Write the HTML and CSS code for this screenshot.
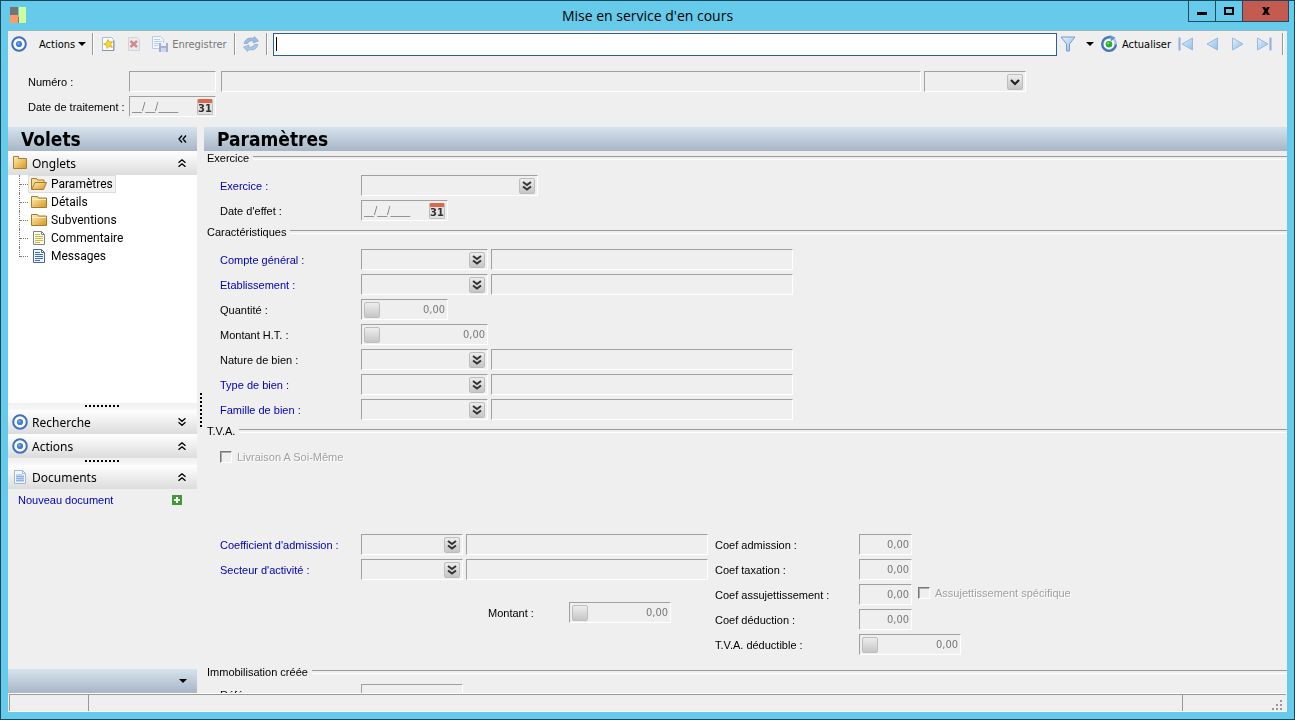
FILE: index.html
```html
<!DOCTYPE html>
<html lang="fr">
<head>
  <meta charset="UTF-8" />
  <title>Mise en service d'en cours</title>
  <link rel="stylesheet" href="styles.css">
</head>
<body>
  <svg class="sprites" aria-hidden="true">
    <defs>
      <linearGradient id="or" x1="0" y1="0" x2="1" y2="1">
        <stop offset="0" stop-color="#fff0b8"/><stop offset="1" stop-color="#d8951c"/>
      </linearGradient>
      <linearGradient id="bleu" x1="0" y1="0" x2="1" y2="1">
        <stop offset="0" stop-color="#e4f0fc"/><stop offset="1" stop-color="#8dbdec"/>
      </linearGradient>
    </defs>
    <symbol id="cible" viewBox="0 0 16 16">
      <circle cx="8" cy="8" r="6.8" fill="#fff" stroke="#3f6fc0" stroke-width="2"/>
      <circle cx="8" cy="8" r="3.1" fill="#3d7fd0"/>
      <circle cx="7.4" cy="7.4" r="1.2" fill="#7db4ee"/>
    </symbol>
    <symbol id="bas" viewBox="0 0 8 4"><path d="M0 0h8L4 4z" fill="#000"/></symbol>
    <symbol id="double-bas" viewBox="0 0 12 12">
      <path d="M2 2l4 3 4-3M2 6.500l4 3 4-3" fill="none" stroke="#333" stroke-width="2"/>
    </symbol>
    <symbol id="plier" viewBox="0 0 8 8">
      <path d="M.5 3.800L4 .8l3.500 3M.5 7.800L4 4.800l3.500 3" fill="none" stroke="#000" stroke-width="1.300"/>
    </symbol>
    <symbol id="deplier" viewBox="0 0 8 8">
      <path d="M.5.3L4 3.300 7.500.3M.5 4.300L4 7.300l3.500-3" fill="none" stroke="#000" stroke-width="1.300"/>
    </symbol>
    <symbol id="classeur" viewBox="0 0 16 16">
      <path d="M1.500 13.500v-12h5v2h8v10z" fill="url(#or)" stroke="#a5802f"/>
    </symbol>
    <symbol id="dossier" viewBox="0 0 16 16">
      <path d="M.5 13.500v-11h6l1 1.500h8v9.500z" fill="url(#or)" stroke="#a87c26"/>
      <path d="M1 5.500h14" stroke="#fff3c4"/>
    </symbol>
    <symbol id="dossier-ouvert" viewBox="0 0 16 16">
      <path d="M.5 13.500v-11h5l1 1.500h6.500v3" fill="#f7dc8c" stroke="#a87c26"/>
      <path d="M.7 13.500L4 6.500h11.500l-3 7z" fill="url(#or)" stroke="#a87c26"/>
    </symbol>
    <symbol id="page-jaune" viewBox="0 0 16 16">
      <path d="M2.500 1.500h8l3 3v10h-11z" fill="#fffde0" stroke="#7b8798"/>
      <path d="M10.500 1.500v3h3" fill="none" stroke="#7b8798"/>
      <path d="M4 4.500h5M4 6.500h8M4 8.500h8M4 10.500h8M4 12.500h5" stroke="#c9b551"/>
    </symbol>
    <symbol id="page-bleue" viewBox="0 0 16 16">
      <path d="M2.500 1.500h8l3 3v10h-11z" fill="#f2f7ff" stroke="#4d6795"/>
      <path d="M10.500 1.500v3h3" fill="none" stroke="#4d6795"/>
      <path d="M4 4.500h5M4 6.500h8M4 8.500h8M4 10.500h8M4 12.500h5" stroke="#3c6cd6"/>
    </symbol>
    <symbol id="document" viewBox="0 0 16 16">
      <path d="M2.500 1.500h8l3 3v10h-11z" fill="#f4f8ff" stroke="#a3b6d4"/>
      <path d="M10.500 1.500v3h3" fill="none" stroke="#a3b6d4"/>
      <path d="M4 5h6v1h2v7H4z" fill="#bcd3f3"/>
      <path d="M4 7.500h8M4 9.500h8M4 11.500h8" stroke="#8fb2e6"/>
    </symbol>
    <symbol id="nouveau" viewBox="0 0 16 16">
      <path d="M2.500 1.500h9l2 2v11h-11z" fill="#fbfcff" stroke="#a9bbd2"/>
      <path d="M2 14.500h12v-10" fill="none" stroke="#7d93b0"/>
      <path d="M8 3.500l1.400 2.500 3.300-.4-2 2.600 1.600 3.300-3.300-1L7 12.500l-.4-3L3.500 8.200l2.900-1.300z" fill="#f6da2c" stroke="#c9a51d" stroke-width=".7"/>
    </symbol>
    <symbol id="supprimer" viewBox="0 0 16 16">
      <path d="M2.500 1.500h9l2 2v11h-11z" fill="#e9e9ee" stroke="#cfd3da"/>
      <path d="M4.500 5l6.500 6M11 5l-6.500 6" stroke="#d4898c" stroke-width="2.400"/>
    </symbol>
    <symbol id="enregistrer" viewBox="0 0 16 16">
      <path d="M.5.500h8l3 3v9h-11z" fill="#f3f6fb" stroke="#bccbe0"/>
      <path d="M2 3.500h6M2 5.500h8M2 7.500h5M2 9.500h4" stroke="#b9cdea"/>
      <path d="M7 7h9v9H7z" fill="#a3aed8"/>
      <path d="M9 7h5v3H9z" fill="#eef1fa"/><path d="M9 12h5v4H9z" fill="#cfd5ea"/>
    </symbol>
    <symbol id="sync" viewBox="0 0 18 18">
      <path d="M2 8.500C3 4 7.500 2 11 3.500l1.500-2L16.500 6l-5.500 2 .5-2C9 5.500 7 6 5.500 8.500z" fill="#9bbbe2" stroke="#7f9fca" stroke-width=".6"/>
      <path d="M16 9.500c-1 4.500-5.500 6.500-9 5l-1.500 2L1.500 12 7 10l-.5 2c2.500.5 4.500 0 6-2.500z" fill="#a9c6e9" stroke="#7f9fca" stroke-width=".6"/>
    </symbol>
    <symbol id="filtre" viewBox="0 0 16 16">
      <path d="M1 1h14L9.500 8v7h-3V8z" fill="url(#bleu)" stroke="#7c9cc6"/>
    </symbol>
    <symbol id="actualiser" viewBox="0 0 18 18">
      <circle cx="9" cy="9" r="5" fill="#fff"/>
      <path d="M15.800 8.500A6.800 6.800 0 1 1 10 2.300" fill="none" stroke="#4475bd" stroke-width="2.400"/>
      <path d="M15.900 9.500A6.800 6.800 0 0 0 13 3.500" fill="none" stroke="#a9c4e6" stroke-width="2"/>
      <path d="M9.500 0l6 2.500-4.500 4z" fill="#5f95d6"/>
      <circle cx="9" cy="9.300" r="3.300" fill="#27ae2d"/><circle cx="8.200" cy="8.400" r="1.100" fill="#7fdd76"/>
    </symbol>
    <symbol id="precedent" viewBox="0 0 16 16"><path d="M13.500 2v12L3 8z" fill="url(#bleu)" stroke="#9ab9de"/></symbol>
    <symbol id="suivant" viewBox="0 0 16 16"><path d="M2.500 2v12L13 8z" fill="url(#bleu)" stroke="#9ab9de"/></symbol>
    <symbol id="premier" viewBox="0 0 16 16">
      <path d="M1.500 1.500v13" stroke="#8faedb" stroke-width="2"/><path d="M14.500 2v12L4 8z" fill="url(#bleu)" stroke="#9ab9de"/>
    </symbol>
    <symbol id="dernier" viewBox="0 0 16 16">
      <path d="M14.500 1.500v13" stroke="#8faedb" stroke-width="2"/><path d="M1.500 2v12L12 8z" fill="url(#bleu)" stroke="#9ab9de"/>
    </symbol>
  </svg>

  <div class="fenetre">
    <header class="titre">
      <svg class="logo" viewBox="0 0 16 16">
        <path d="M0 0h8v8H0z" fill="#747474"/><path d="M0 8h8v8H0z" fill="#ff9966"/>
        <path d="M9 0h7v16H9z" fill="#ccff99"/><path d="M8 10h1v6H8z" fill="#7b7b7b"/>
      </svg>
      <h1>Mise en service d'en cours</h1>
      <div class="systeme">
        <button type="button" aria-label="Réduire"><svg width="12" height="12"><path d="M1 7h10v3H1z"/></svg></button>
        <button type="button" aria-label="Agrandir"><svg width="12" height="12"><path d="M2 3h8v6H2z" fill="none" stroke="#000" stroke-width="2"/></svg></button>
        <button type="button" class="fermer" aria-label="Fermer"><svg width="12" height="12"><path d="M2 2h3l1 2 1-2h3L7.500 6 10 10H7L6 8l-1 2H2l2.500-4z"/></svg></button>
      </div>
    </header>

    <div class="cadre">
      <div class="outils">
        <svg class="icone"><use href="#cible"/></svg>
        <button type="button" class="actions">Actions<svg class="fleche"><use href="#bas"/></svg></button>
        <span class="sep"></span>
        <div class="groupe">
          <button type="button" aria-label="Nouveau"><svg class="icone"><use href="#nouveau"/></svg></button>
          <button type="button" aria-label="Supprimer"><svg class="icone"><use href="#supprimer"/></svg></button>
          <button type="button" class="gris"><svg class="icone"><use href="#enregistrer"/></svg>Enregistrer</button>
        </div>
        <span class="sep"></span>
        <button type="button" class="sync" aria-label="Synchroniser"><svg class="icone grande"><use href="#sync"/></svg></button>
        <span class="sep"></span>
        <input type="text" class="recherche" aria-label="Rechercher" autofocus>
        <button type="button" class="filtre" aria-label="Filtrer"><svg class="icone"><use href="#filtre"/></svg><svg class="fleche"><use href="#bas"/></svg></button>
        <button type="button" class="actualiser"><svg class="icone grande"><use href="#actualiser"/></svg>Actualiser</button>
        <div class="navigation">
          <button type="button" aria-label="Premier"><svg class="icone"><use href="#premier"/></svg></button>
          <button type="button" aria-label="Précédent"><svg class="icone"><use href="#precedent"/></svg></button>
          <button type="button" aria-label="Suivant"><svg class="icone"><use href="#suivant"/></svg></button>
          <button type="button" aria-label="Dernier"><svg class="icone"><use href="#dernier"/></svg></button>
        </div>
        <span class="sep"></span>
      </div>

      <div class="entete">
        <div class="ligne">
          <label for="numero">Numéro :</label>
          <div class="champ w87"><input type="text" id="numero"></div>
          <div class="champ long"><input type="text" aria-label="Libellé"></div>
          <div class="champ w102">
            <select aria-label="Etat"><option></option></select>
            <span class="mini"><svg viewBox="0 0 12 12"><path d="M2 4l4 4 4-4" fill="none" stroke="#222" stroke-width="2.200"/></svg></span>
          </div>
        </div>
        <div class="ligne">
          <label for="traitement">Date de traitement :</label>
          <div class="champ w87"><input type="text" id="traitement" value="__/__/____"><button type="button" class="calendrier" aria-label="Calendrier">31</button></div>
        </div>
      </div>

      <div class="corps">
        <aside class="volets">
          <div class="bandeau">
            <h2>Volets</h2>
            <button type="button" aria-label="Masquer"><svg width="9" height="8" viewBox="0 0 9 8"><path d="M4 .5L1 4l3 3.500M8 .5L5 4l3 3.500" fill="none" stroke="#000" stroke-width="1.300"/></svg></button>
          </div>
          <button type="button" class="section"><svg class="icone"><use href="#classeur"/></svg><span>Onglets</span><svg class="pli"><use href="#plier"/></svg></button>
          <ul class="arbre">
            <li><a href="#" class="actif"><svg class="icone"><use href="#dossier-ouvert"/></svg><span>Paramètres</span></a></li>
            <li><a href="#"><svg class="icone"><use href="#dossier"/></svg><span>Détails</span></a></li>
            <li><a href="#"><svg class="icone"><use href="#dossier"/></svg><span>Subventions</span></a></li>
            <li><a href="#"><svg class="icone"><use href="#page-jaune"/></svg><span>Commentaire</span></a></li>
            <li><a href="#"><svg class="icone"><use href="#page-bleue"/></svg><span>Messages</span></a></li>
          </ul>
          <div class="poignee"></div>
          <button type="button" class="section"><svg class="icone"><use href="#cible"/></svg><span>Recherche</span><svg class="pli"><use href="#deplier"/></svg></button>
          <button type="button" class="section"><svg class="icone"><use href="#cible"/></svg><span>Actions</span><svg class="pli"><use href="#plier"/></svg></button>
          <div class="poignee"></div>
          <button type="button" class="section"><svg class="icone"><use href="#document"/></svg><span>Documents</span><svg class="pli"><use href="#plier"/></svg></button>
          <div class="documents">
            <a href="#">Nouveau document</a>
            <button type="button" aria-label="Ajouter"><svg width="10" height="10"><path d="M0 0h10v10H0z" fill="#3f9a35"/><path d="M5 2v6M2 5h6" stroke="#fff" stroke-width="2"/></svg></button>
          </div>
          <div class="bandeau pied">
            <button type="button" aria-label="Plus"><svg class="fleche"><use href="#bas"/></svg></button>
          </div>
        </aside>
        <div class="separateur"></div>

        <main class="contenu">
          <div class="bandeau"><h2>Paramètres</h2></div>

          <fieldset>
            <legend>Exercice</legend>
            <div class="ligne">
              <label for="exercice" class="lien">Exercice :</label>
              <div class="champ w177"><input type="text" id="exercice"><button type="button" class="mini" aria-label="Choisir"><svg><use href="#double-bas"/></svg></button></div>
            </div>
            <div class="ligne">
              <label for="effet">Date d'effet :</label>
              <div class="champ w87"><input type="text" id="effet" value="__/__/____"><button type="button" class="calendrier" aria-label="Calendrier">31</button></div>
            </div>
          </fieldset>

          <fieldset>
            <legend>Caractéristiques</legend>
            <div class="ligne">
              <label for="compte" class="lien">Compte général :</label>
              <div class="champ w127"><input type="text" id="compte"><button type="button" class="mini" aria-label="Choisir"><svg><use href="#double-bas"/></svg></button></div>
              <div class="champ w302"><input type="text" aria-label="Libellé du compte"></div>
            </div>
            <div class="ligne">
              <label for="etablissement" class="lien">Etablissement :</label>
              <div class="champ w127"><input type="text" id="etablissement"><button type="button" class="mini" aria-label="Choisir"><svg><use href="#double-bas"/></svg></button></div>
              <div class="champ w302"><input type="text" aria-label="Libellé de l'établissement"></div>
            </div>
            <div class="ligne">
              <label for="quantite">Quantité :</label>
              <div class="champ w87"><button type="button" class="mini" aria-label="Calculer"></button><input type="text" id="quantite" class="nombre" value="0,00"></div>
            </div>
            <div class="ligne">
              <label for="montantht">Montant H.T. :</label>
              <div class="champ w127"><button type="button" class="mini" aria-label="Calculer"></button><input type="text" id="montantht" class="nombre" value="0,00"></div>
            </div>
            <div class="ligne">
              <label for="nature">Nature de bien :</label>
              <div class="champ w127"><input type="text" id="nature"><button type="button" class="mini" aria-label="Choisir"><svg><use href="#double-bas"/></svg></button></div>
              <div class="champ w302"><input type="text" aria-label="Libellé de la nature"></div>
            </div>
            <div class="ligne">
              <label for="type" class="lien">Type de bien :</label>
              <div class="champ w127"><input type="text" id="type"><button type="button" class="mini" aria-label="Choisir"><svg><use href="#double-bas"/></svg></button></div>
              <div class="champ w302"><input type="text" aria-label="Libellé du type"></div>
            </div>
            <div class="ligne">
              <label for="famille" class="lien">Famille de bien :</label>
              <div class="champ w127"><input type="text" id="famille"><button type="button" class="mini" aria-label="Choisir"><svg><use href="#double-bas"/></svg></button></div>
              <div class="champ w302"><input type="text" aria-label="Libellé de la famille"></div>
            </div>
          </fieldset>

          <fieldset>
            <legend>T.V.A.</legend>
            <div class="case seule">
              <input type="checkbox" id="livraison" disabled><label for="livraison">Livraison A Soi-Même</label>
            </div>
            <div class="tva">
              <div class="gauche">
                <div class="ligne">
                  <label for="coefficient" class="lien">Coefficient d'admission :</label>
                  <div class="champ w102"><input type="text" id="coefficient"><button type="button" class="mini" aria-label="Choisir"><svg><use href="#double-bas"/></svg></button></div>
                  <div class="champ w242"><input type="text" aria-label="Libellé du coefficient"></div>
                </div>
                <div class="ligne">
                  <label for="secteur" class="lien">Secteur d'activité :</label>
                  <div class="champ w102"><input type="text" id="secteur"><button type="button" class="mini" aria-label="Choisir"><svg><use href="#double-bas"/></svg></button></div>
                  <div class="champ w242"><input type="text" aria-label="Libellé du secteur"></div>
                </div>
                <div class="ligne montant">
                  <label for="montant">Montant :</label>
                  <div class="champ w102"><button type="button" class="mini" aria-label="Calculer"></button><input type="text" id="montant" class="nombre" value="0,00"></div>
                </div>
              </div>
              <div class="droite">
                <div class="ligne">
                  <label for="admission">Coef admission :</label>
                  <div class="champ w53"><input type="text" id="admission" class="nombre" value="0,00"></div>
                </div>
                <div class="ligne">
                  <label for="taxation">Coef taxation :</label>
                  <div class="champ w53"><input type="text" id="taxation" class="nombre" value="0,00"></div>
                </div>
                <div class="ligne">
                  <label for="assujettissement">Coef assujettissement :</label>
                  <div class="champ w53"><input type="text" id="assujettissement" class="nombre" value="0,00"></div>
                  <div class="case">
                    <input type="checkbox" id="specifique" disabled><label for="specifique">Assujettissement spécifique</label>
                  </div>
                </div>
                <div class="ligne">
                  <label for="deduction">Coef déduction :</label>
                  <div class="champ w53"><input type="text" id="deduction" class="nombre" value="0,00"></div>
                </div>
                <div class="ligne">
                  <label for="deductible">T.V.A. déductible :</label>
                  <div class="champ w102"><button type="button" class="mini" aria-label="Calculer"></button><input type="text" id="deductible" class="nombre" value="0,00"></div>
                </div>
              </div>
            </div>
          </fieldset>

          <fieldset class="serre">
            <legend>Immobilisation créée</legend>
            <div class="ligne">
              <label for="reference">Référence :</label>
              <div class="champ w102"><input type="text" id="reference"></div>
            </div>
          </fieldset>
        </main>
      </div>

      <footer class="etat">
        <span></span><span></span>
        <span><svg width="11" height="11" fill="#999"><path d="M8 0h2v2H8zM4 4h2v2H4zM8 4h2v2H8zM0 8h2v2H0zM4 8h2v2H4zM8 8h2v2H8z"/></svg></span>
      </footer>
    </div>
  </div>
</body>
</html>
```
FILE: styles.css
```css
* {
  box-sizing: border-box;
}
body {
  margin: 0;
  font-family: "Liberation Sans", Arial, sans-serif;
  font-size: 11px;
  color: #000;
}
button {
  display: flex;
  align-items: center;
  padding: 0;
  border: none;
  background: none;
  color: #000;
  font-family: "DejaVu Sans Condensed", Tahoma, sans-serif;
  font-size: 11px;
}
a {
  text-decoration: none;
}
svg {
  flex: none;
}
.sprites {
  position: absolute;
  width: 0;
  height: 0;
}
.icone {
  width: 16px;
  height: 16px;
}
.icone.grande {
  width: 18px;
  height: 18px;
}
.fleche {
  width: 8px;
  height: 4px;
}

.fenetre {
  display: flex;
  flex-direction: column;
  height: 100vh;
  padding: 0 7px 7px;
  border: 1px solid #17485c;
  background: #66cbea;
}
.titre {
  display: grid;
  grid-template-columns: 1fr auto 1fr;
  height: 29px;
}
.titre h1 {
  margin: 0;
  font-family: "Open Sans", "Segoe UI", sans-serif;
  font-size: 14px;
  font-weight: normal;
  line-height: 30px;
}
.logo {
  width: 16px;
  height: 16px;
  margin: 6px 2px;
}
.systeme {
  display: flex;
  justify-content: flex-end;
  height: 21px;
  margin-right: -2px;
}
.systeme button {
  justify-content: center;
  width: 27px;
  border: 1px solid #24495a;
  border-top: none;
  border-right: none;
}
.systeme .fermer {
  width: 47px;
  border-right: 1px solid #24495a;
  background: #c45a50;
}
.cadre {
  display: flex;
  flex: 1;
  flex-direction: column;
  min-height: 0;
  background: #efefef;
  border-top: 1px solid #9fb6be;
}

/* Barre d'outils */
.outils {
  display: flex;
  align-items: center;
  gap: 3px;
  height: 26px;
  padding: 0 1px 0 3px;
}
.sep {
  width: 2px;
  height: 22px;
  margin: 0 2px;
  border-left: 1px solid #999;
  border-right: 1px solid #fff;
}
.actions {
  gap: 3px;
  margin: 0 1px 0 9px;
}
.groupe {
  display: flex;
  gap: 10px;
  margin: 0 2px 0 1px;
}
.sync {
  margin: 0 1px;
}
.outils .gris {
  gap: 4px;
  color: #777;
}
.recherche {
  flex: 1;
  min-width: 0;
  height: 23px;
  padding: 0 2px;
  border: 1px solid #2f5f9a;
  outline: none;
  background: #fff;
  caret-color: transparent;
}
.recherche:focus {
  background: linear-gradient(#000, #000) 2px 3px / 1px 14px no-repeat #fff;
}
.filtre {
  gap: 10px;
}
.actualiser {
  gap: 4px;
  margin-left: 3px;
}
.navigation {
  display: flex;
  gap: 10px;
  margin: 0 5px 0 4px;
}

/* Champs */
.ligne {
  display: flex;
  gap: 3px;
  height: 25px;
}
.ligne > label {
  width: 141px;
  margin-right: -3px;
  line-height: 23px;
}
.lien,
.documents a {
  color: #0000b4;
}
.champ {
  display: flex;
  align-items: center;
  height: 21px;
  padding: 0 2px;
  border: 1px solid;
  border-color: #a0a0a0 #fff #fff #a0a0a0;
}
.champ input,
.champ select {
  flex: 1;
  width: 0;
  min-width: 0;
  height: 17px;
  padding: 0;
  border: none;
  outline: none;
  appearance: none;
  background: none;
  color: #777;
  font-family: "DejaVu Sans Condensed", Tahoma, sans-serif;
  font-size: 11px;
}
.champ .nombre {
  text-align: right;
}
.w53 { width: 53px; }
.w87 { width: 87px; }
.w102 { width: 102px; }
.w127 { width: 127px; }
.w177 { width: 177px; }
.w242 { width: 242px; }
.w302 { width: 302px; }
.mini,
.calendrier {
  display: flex;
  justify-content: center;
  align-items: center;
  flex: none;
  width: 16px;
  height: 16px;
  border: 1px solid #bdbdbd;
  border-radius: 2px;
  background: linear-gradient(#ededed, #c6c6c6);
}
.mini svg {
  width: 12px;
  height: 12px;
}
.calendrier {
  border-top: 4px solid #d9694a;
  background: #e2e2e2;
  color: #333;
  font-weight: bold;
}
.case {
  display: flex;
  align-items: center;
  gap: 5px;
  height: 18px;
  margin-left: 3px;
  color: #a0a0a0;
  text-shadow: 1px 1px #fff;
}
.case input {
  width: 12px;
  height: 12px;
  margin: 0;
  appearance: none;
  border: 1px solid;
  border-color: #777 #fff #fff #777;
  box-shadow: inset 1px 1px #aaa;
}

.entete {
  padding: 14px 20px 6px;
}
.entete .ligne {
  max-width: 998px;
}
.entete .ligne > label {
  width: 101px;
}
.entete .long {
  flex: 1;
  margin-left: 2px;
}

/* Volets */
.corps {
  display: flex;
  flex: 1;
  min-height: 0;
}
.volets {
  display: flex;
  flex-direction: column;
  width: 189px;
}
.bandeau {
  display: flex;
  flex: none;
  justify-content: space-between;
  align-items: center;
  height: 24px;
  padding: 0 10px 0 13px;
  background: linear-gradient(#d6e3ee, #a7b6c6);
}
.bandeau h2 {
  margin: 0;
  font-family: "DejaVu Sans Condensed", Tahoma, sans-serif;
  font-size: 19px;
  line-height: 24px;
}
.section {
  flex: none;
  gap: 4px;
  height: 24px;
  padding: 0 11px 0 4px;
  background: linear-gradient(#fff, #dcdcdc);
  font-family: "Noto Sans", Tahoma, sans-serif;
  font-size: 12px;
}
.pli {
  width: 8px;
  height: 8px;
  margin-left: auto;
}
.arbre {
  flex: 1;
  margin: 0;
  padding: 0 0 0 11px;
  background: #fff;
  list-style: none;
}
.arbre li {
  display: flex;
  align-items: center;
  height: 18px;
  border-left: 1px dotted #777;
}
.arbre li::before {
  content: '';
  width: 8px;
  border-top: 1px dotted #777;
}
.arbre a {
  display: flex;
  align-items: center;
  gap: 4px;
  height: 18px;
  padding: 0 2px;
  border: 1px solid #fff;
  color: #000;
  font-family: Roboto, Tahoma, sans-serif;
  font-size: 12px;
}
.arbre li:last-child {
  align-items: flex-start;
  height: 10px;
}
.arbre li:last-child::before {
  margin-top: 9px;
}
.arbre .actif {
  background: #f2f2f2;
  border-color: #dcdcdc;
}
.poignee {
  display: flex;
  flex: none;
  justify-content: center;
  height: 7px;
  background: linear-gradient(#efefef, #f8f8f8);
}
.poignee::after {
  content: '';
  width: 35px;
  margin-top: 2px;
  height: 2px;
  background: repeating-linear-gradient(90deg, #000 0 2px, transparent 2px 4px);
}
.documents {
  display: flex;
  flex: none;
  justify-content: space-between;
  height: 180px;
  padding: 4px 15px 0 10px;
}
.documents a {
  line-height: 14px;
}
.documents button {
  height: 14px;
}
.pied {
  justify-content: flex-end;
}
.separateur {
  display: flex;
  align-items: center;
  justify-content: center;
  width: 7px;
}
.separateur::after {
  content: '';
  width: 2px;
  height: 35px;
  background: repeating-linear-gradient(#000 0 2px, transparent 2px 4px);
}

/* Contenu */
.contenu {
  flex: 1;
  min-width: 0;
  overflow: hidden;
}
fieldset {
  min-width: 0;
  margin: 0;
  padding: 10px 0 0;
  border: none;
}
fieldset > div {
  margin-left: 16px;
}
legend {
  display: flex;
  align-items: center;
  gap: 4px;
  width: 100%;
  height: 14px;
  padding: 0 0 0 3px;
}
legend::after {
  content: '';
  flex: 1;
  height: 2px;
  border-top: 1px solid #999;
  border-bottom: 1px solid #fff;
}
.seule {
  margin: 0 0 68px 16px;
}
.tva {
  display: flex;
  gap: 7px;
  padding-bottom: 6px;
}
.montant {
  margin: 18px 0 0 268px;
}
.ligne.montant > label {
  width: 81px;
}
.droite .ligne > label {
  width: 144px;
}
.serre {
  padding-top: 5px;
}

/* Barre d'état */
.etat {
  display: grid;
  grid-template-columns: 79px 1fr 104px;
  flex: none;
  height: 19px;
  padding: 0 1px;
  border-top: 1px solid #fff;
  border-bottom: 1px solid #fff;
}
.etat span {
  display: flex;
  justify-content: flex-end;
  align-items: flex-end;
  padding-right: 3px;
  border-top: 1px solid #999;
  border-left: 1px solid #999;
}
```
